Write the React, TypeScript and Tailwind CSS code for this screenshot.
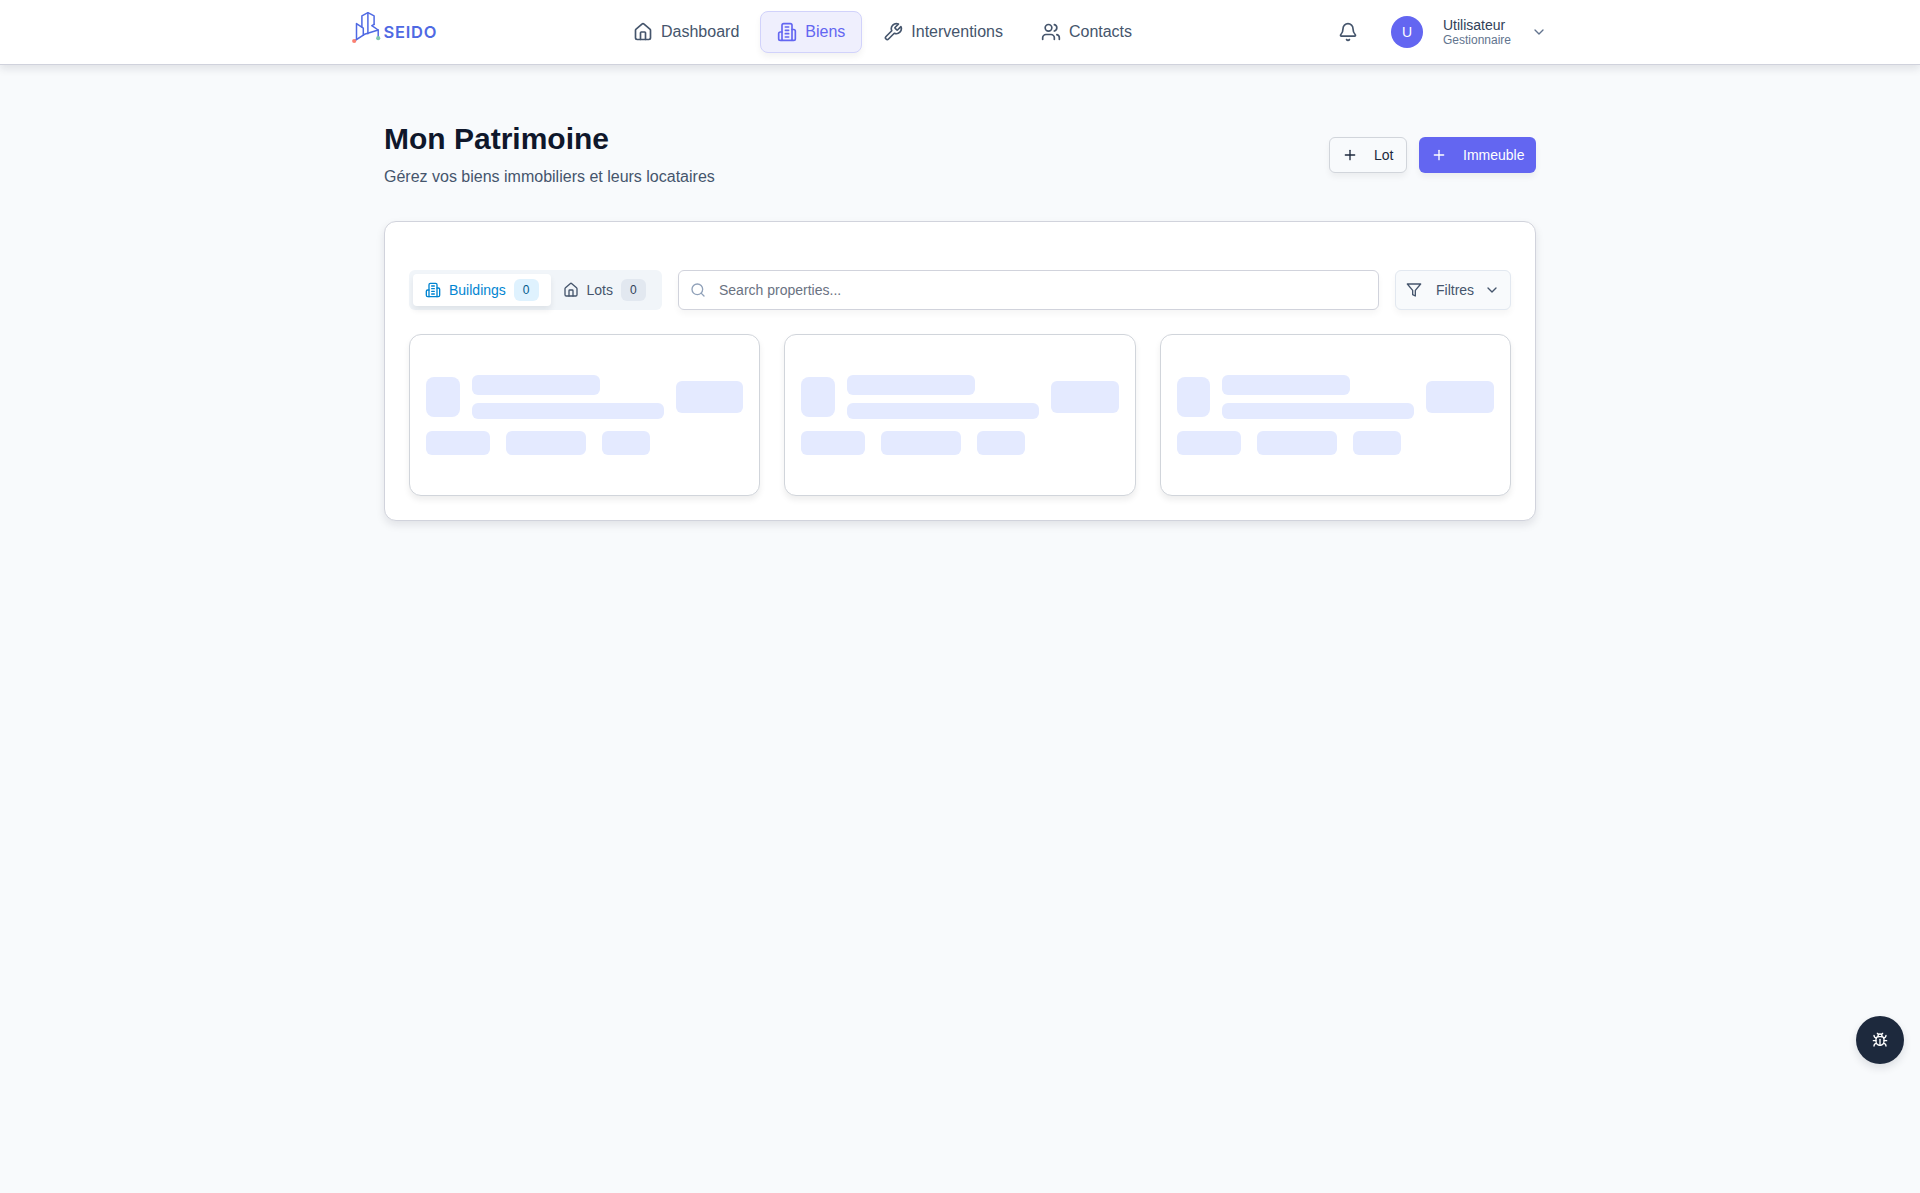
import React from "react";
import { Bell, Bug, ChevronDown, House, Plus, Search, Users } from "lucide-react";

type IconProps = { className?: string };

function StrokeIcon({ className, children }: IconProps & { children: React.ReactNode }) {
  return (
    <svg
      viewBox="0 0 24 24"
      fill="none"
      stroke="currentColor"
      strokeWidth="2"
      strokeLinecap="round"
      strokeLinejoin="round"
      className={className}
    >
      {children}
    </svg>
  );
}

const Building = ({ className }: IconProps) => (
  <StrokeIcon className={className}>
    <path d="M6 22V4a2 2 0 0 1 2-2h8a2 2 0 0 1 2 2v18Z" />
    <path d="M6 12H4a2 2 0 0 0-2 2v6a2 2 0 0 0 2 2h2" />
    <path d="M18 9h2a2 2 0 0 1 2 2v9a2 2 0 0 1-2 2h-2" />
    <path d="M10 6h4M10 10h4M10 14h4M10 18h4" />
  </StrokeIcon>
);

const WrenchIcon = ({ className }: IconProps) => (
  <StrokeIcon className={className}>
    <path d="M14.7 6.3a1 1 0 0 0 0 1.4l1.6 1.6a1 1 0 0 0 1.4 0l3.77-3.77a6 6 0 0 1-7.94 7.94l-6.91 6.91a2.12 2.12 0 0 1-3-3l6.91-6.91a6 6 0 0 1 7.94-7.94l-3.76 3.76z" />
  </StrokeIcon>
);

const Funnel = ({ className }: IconProps) => (
  <StrokeIcon className={className}>
    <polygon points="22 3 2 3 10 12.46 10 19 14 21 14 12.46 22 3" />
  </StrokeIcon>
);

function Logo() {
  return (
    <svg width="88" height="36" viewBox="0 0 88 36" className="shrink-0">
      <g fill="none" stroke="#4f69e3" strokeWidth="1.5" strokeLinejoin="round" strokeLinecap="round">
        <path d="M4.5 29V13.6l6.8 4.6v7" />
        <path d="M9.9 16.8V5.8L15.9 2.7l6.2 3.2v8.5" />
        <path d="M15.9 2.7v21" />
        <path d="M22.1 14.4l-2.3 1.2 6.4 4.4v8" />
        <path d="M3 30.5l9.5-6.2 13.7-4.3" />
      </g>
      <circle cx="2.2" cy="31" r="2.1" fill="#fa8072" />
      <circle cx="26.2" cy="28.2" r="2.1" fill="#80c7ad" />
      <text
        x="31.4"
        y="27.8"
        textLength="53"
        fill="#4f69e3"
        fontFamily="Inter, sans-serif"
        fontSize="16.5"
        fontWeight="600"
      >
        SEIDO
      </text>
    </svg>
  );
}

const nav = [
  { label: "Dashboard", icon: House, active: false },
  { label: "Biens", icon: Building, active: true },
  { label: "Interventions", icon: WrenchIcon, active: false },
  { label: "Contacts", icon: Users, active: false },
];

function Header() {
  return (
    <header className="h-[65px] border-b border-[#d0d2dc] bg-white shadow-[0_4px_8px_rgba(15,23,42,0.1)]">
      <div className="mx-auto flex h-16 w-[1216px] items-center">
        <div className="flex h-full w-[264px] items-start pt-[10px]">
          <Logo />
        </div>
        <nav className="flex items-center gap-1">
          {nav.map(({ label, icon: Icon, active }) => (
            <a
              key={label}
              className={
                active
                  ? "flex items-center gap-2 rounded-lg border border-[#d1d2fb] bg-[#efeffd] px-4 py-2 text-base text-[#6366f1] shadow-[0_4px_6px_rgba(0,0,0,0.05)]"
                  : "flex items-center gap-2 rounded-lg border border-transparent px-4 py-2 text-base text-slate-600"
              }
            >
              <Icon className="size-5" />
              {label}
            </a>
          ))}
        </nav>
        <div className="ml-auto flex items-center pr-[21px]">
          <Bell className="size-5 text-slate-600" />
          <div className="ml-[33px] flex size-8 items-center justify-center rounded-full bg-[#6366f1] text-sm font-medium text-white">
            U
          </div>
          <div className="ml-5 flex w-[88px] flex-col pb-px">
            <span className="text-sm leading-[16px] text-slate-700">Utilisateur</span>
            <span className="text-xs leading-[14px] text-slate-500">Gestionnaire</span>
          </div>
          <ChevronDown className="size-4 text-slate-500" />
        </div>
      </div>
    </header>
  );
}

function SkeletonCard() {
  return (
    <div className="h-[162px] rounded-xl border border-[#d1d5db] bg-white px-4 pt-10 shadow-[0_4px_6px_rgba(0,0,0,0.07)]">
      <div className="flex items-center gap-3">
        <div className="h-10 w-[33.6px] rounded-lg bg-[#e4eaff]" />
        <div className="w-48 space-y-2">
          <div className="h-5 w-32 rounded-md bg-[#e4eaff]" />
          <div className="h-4 w-48 rounded-md bg-[#e4eaff]" />
        </div>
        <div className="h-8 min-w-0 flex-1 rounded-md bg-[#e4eaff]" />
      </div>
      <div className="mt-3 flex gap-4">
        <div className="h-6 w-16 rounded-md bg-[#e4eaff]" />
        <div className="h-6 w-20 rounded-md bg-[#e4eaff]" />
        <div className="h-6 w-12 rounded-md bg-[#e4eaff]" />
      </div>
    </div>
  );
}

export default function App() {
  return (
    <div className="h-[1193px] bg-slate-50 font-['Liberation_Sans',Arial,sans-serif]">
      <Header />
      <main className="mx-auto w-[1152px] pt-14">
        <div className="flex items-center justify-between">
          <div>
            <h1 className="text-3xl font-bold text-slate-900">Mon Patrimoine</h1>
            <p className="mt-2 text-base text-slate-600">Gérez vos biens immobiliers et leurs locataires</p>
          </div>
          <div className="flex gap-3 text-sm">
            <button className="flex h-9 w-[78px] items-center gap-4 rounded-md border border-[#d1d5db] bg-slate-50 px-3 text-slate-800 shadow-[0_4px_6px_rgba(0,0,0,0.05)]">
              <Plus className="size-4 shrink-0" />
              Lot
            </button>
            <button className="flex h-9 w-[117px] items-center gap-4 rounded-md bg-[#6366f1] px-3 text-white shadow-[0_4px_6px_rgba(0,0,0,0.05)]">
              <Plus className="size-4 shrink-0" />
              Immeuble
            </button>
          </div>
        </div>

        <section className="mt-8 rounded-xl border border-[#d1d3dc] bg-white px-6 pb-6 pt-12 shadow-[0_4px_8px_rgba(15,23,42,0.1)]">
          <div className="flex gap-4 text-sm">
            <div className="flex h-10 w-[253px] rounded-md bg-slate-100 p-1">
              <button className="flex items-center gap-2 rounded bg-white px-3 text-sky-600 shadow-[0_4px_6px_rgba(15,23,42,0.08)]">
                <Building className="size-4" />
                Buildings
                <span className="rounded-md border border-transparent bg-sky-100 px-2 py-0.5 text-xs text-sky-800">0</span>
              </button>
              <button className="flex items-center gap-2 px-3 text-slate-600">
                <House className="size-4" />
                Lots
                <span className="rounded-md border border-transparent bg-slate-200 px-2 py-0.5 text-xs text-slate-700">0</span>
              </button>
            </div>
            <div className="flex h-10 flex-1 items-center rounded-md border border-[#d1d3dc] bg-white pl-[11px] shadow-[0_4px_6px_rgba(0,0,0,0.04)]">
              <Search className="size-4 text-slate-400" />
              <span className="ml-[13px] text-gray-500">Search properties...</span>
            </div>
            <button className="flex h-10 w-[116px] items-center rounded-md border border-slate-200 bg-slate-50 px-2.5 text-slate-600 shadow-[0_4px_6px_rgba(0,0,0,0.04)]">
              <Funnel className="size-4" />
              <span className="ml-3.5">Filtres</span>
              <ChevronDown className="ml-auto size-4" />
            </button>
          </div>
          <div className="mt-6 grid grid-cols-3 gap-6">
            <SkeletonCard />
            <SkeletonCard />
            <SkeletonCard />
          </div>
        </section>
      </main>
      <button className="fixed bottom-[129px] right-4 flex size-12 items-center justify-center rounded-full bg-slate-800 text-white shadow-[0_4px_8px_rgba(15,23,42,0.12)]">
        <Bug className="size-4" />
      </button>
    </div>
  );
}
